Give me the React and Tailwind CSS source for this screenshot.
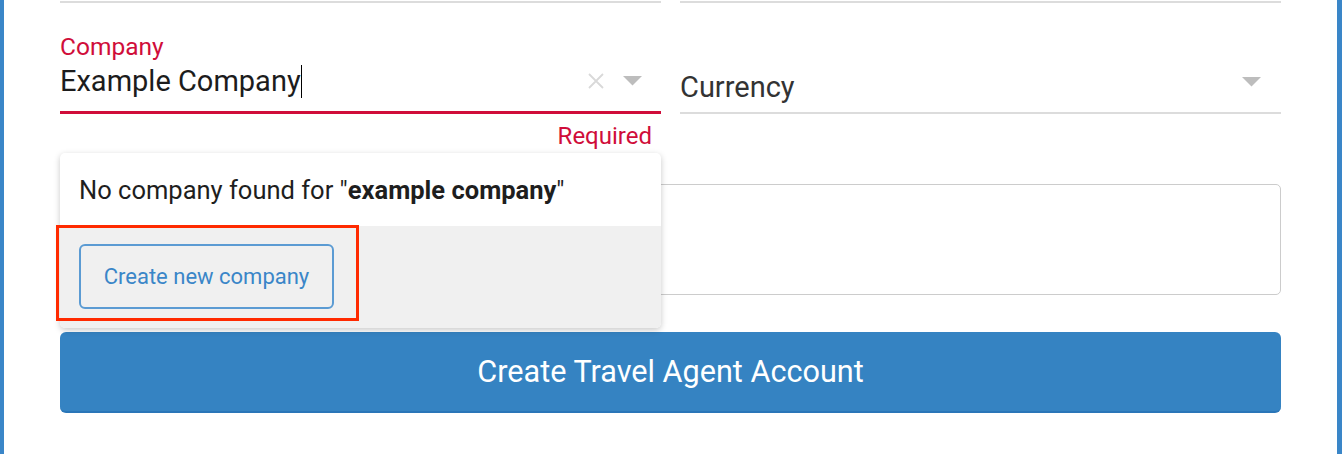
import React from "react";

function Arrow() {
  return (
    <svg width="19" height="10" viewBox="0 0 19 10" className="shrink-0">
      <polygon points="0,0 19,0 9.5,9.5" fill="#bdbdbd" />
    </svg>
  );
}

function Clear() {
  return (
    <svg width="16" height="16" viewBox="0 0 16 16" className="shrink-0">
      <path d="M1 1 L15 15 M15 1 L1 15" stroke="#d9d9d9" strokeWidth="1.8" fill="none" />
    </svg>
  );
}

export default function App() {
  return (
    <div
      className="w-[1342px] h-[454px] bg-white border-l-[4px] border-r-[5px] border-[#3a86c8] px-[56px] overflow-hidden"
      style={{ fontFamily: "Roboto, 'Liberation Sans', sans-serif" }}
    >
      <div className="grid grid-cols-2 gap-x-[19px] pt-[1px]">
        <div className="h-[2px] bg-[#dcdcdc]" />
        <div className="h-[2px] bg-[#dcdcdc]" />

        {/* Company column */}
        <div className="relative flex flex-col">
          <div className="mt-[31px] h-[26px] text-[24.5px] leading-[26px] text-[#d00d3a]">Company</div>
          <div className="mt-[4px] h-[34px] flex items-center pr-[19px]">
            <div className="flex-1 flex items-center text-[29px] leading-[34px] text-[#1c1c1c]">
              <span>Example Company</span>
              <span className="inline-block w-[1.5px] h-[33px] bg-black" />
            </div>
            <Clear />
            <div className="w-[19px]" />
            <Arrow />
          </div>
          <div className="mt-[13px] h-[3px] bg-[#d00d3a]" />
          <div className="mt-[9px] h-[26px] text-[24px] leading-[26px] text-[#d00d3a] text-right pr-[9px]">
            Required
          </div>

          {/* dropdown */}
          <div className="absolute left-0 top-[150px] w-full z-10 rounded-[5px] bg-white overflow-hidden shadow-[0_2px_6px_rgba(0,0,0,0.22)]">
            <div className="h-[73px] flex items-center pl-[19px] text-[25.5px] leading-[28px] text-[#1e1e1e]">
              <span>
                No company found for "<b className="font-bold">example company</b>"
              </span>
            </div>
            <div className="h-[102px] bg-[#f0f0f0] pt-[18px] pl-[19px]">
              <div className="w-[255px] h-[65px] rounded-[6px] border-2 border-[#5b9bd3] flex items-center justify-center text-[22px] text-[#3a86c8]">
                Create new company
              </div>
            </div>
          </div>
          {/* highlight */}
          <div className="absolute left-[-4px] top-[222px] w-[303px] h-[96px] border-[3px] border-[#ff2a00] z-20" />
        </div>

        {/* Currency column */}
        <div className="flex flex-col">
          <div className="mt-[61px] h-[48px] flex items-start pr-[20px]">
            <div className="flex-1 pt-[6px] text-[29px] leading-[34px] text-[#333]">Currency</div>
            <div className="mt-[13px]">
              <Arrow />
            </div>
          </div>
          <div className="h-[2px] bg-[#dcdcdc]" />
        </div>
      </div>

      <div className="mt-[35px] h-[111px] rounded-[5px] border border-[#cccccc]" />

      <div className="mt-[37px] h-[81px] rounded-[6px] bg-[#3583c2] border-b-2 border-[#2a76b8] flex items-center justify-center text-white text-[30.6px]">
        Create Travel Agent Account
      </div>
    </div>
  );
}
